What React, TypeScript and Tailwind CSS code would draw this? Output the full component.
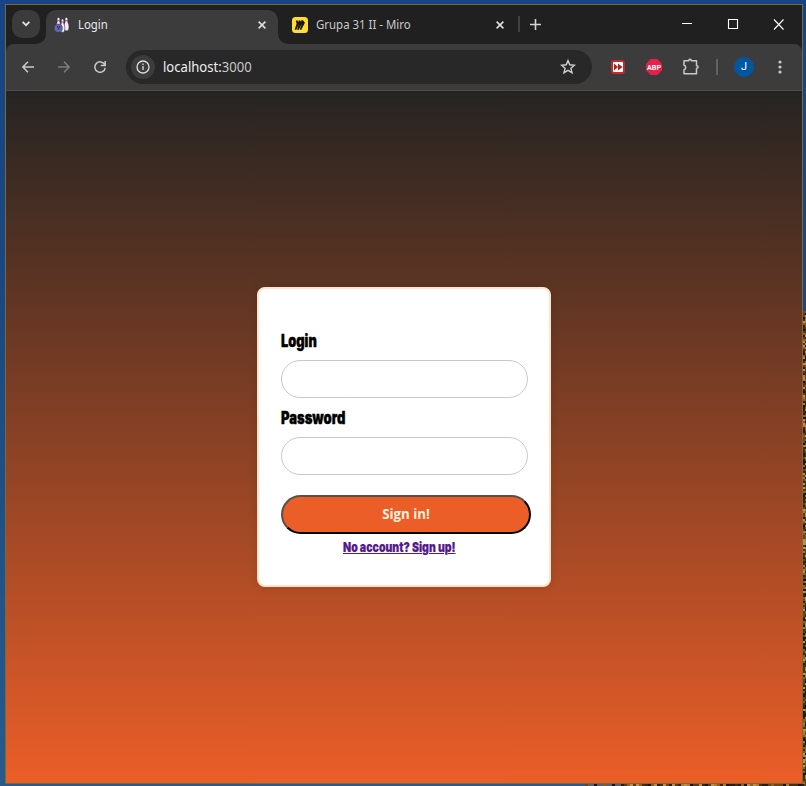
import React from "react";

const GRAIN = ["#6b4518", "#2c1c12", "#a87c38", "#4a2e14", "#b88f50", "#1d140f", "#8a5a1e", "#3b2413", "#8c6026", "#5a3a18"];

function grain(i: number) {
  const n = Math.sin(i * 12.9898) * 43758.5453;
  return GRAIN[Math.floor((n - Math.floor(n)) * GRAIN.length)];
}

function BowlingIcon() {
  return (
    <svg width="16" height="16" viewBox="0 0 16 16">
      <g fill="#f1ecf7" stroke="#281f3d" strokeWidth=".5">
        <path d="M3.1 2c0-2 2.8-2 2.8 0 0 1.3-.5 1.8 0 3.2 1.5 3 1 6 .2 8.300H3c-1-2.500-1.300-5.300.1-8.300.4-1.400 0-1.900 0-3.200Z" />
        <path d="M11 2c0-2 2.800-2 2.800 0 0 1.300-.5 1.800 0 3.200 1.700 3 1.400 6 .4 8.600h-3.500c-1-2.600-1.300-5.600.3-8.600.5-1.400 0-1.900 0-3.200Z" />
        <path d="M7.200 3.500c0-2 2.600-2 2.600 0 0 1.300-.5 1.800 0 3.200 1.500 3 1.200 5.500.3 8.500H7c-.9-3-1.200-5.500.2-8.500.5-1.400 0-1.900 0-3.200Z" />
      </g>
      <path d="M3.300 3.600h2.400M7.300 5h2.400M11.200 3.600h2.400" stroke="#b84462" strokeWidth=".9" />
      <circle cx="4.300" cy="11.200" r="4.100" fill="#6268a7" stroke="#30345f" strokeWidth=".5" />
      <circle cx="3.700" cy="9.700" r=".7" fill="#20244e" />
      <circle cx="5.600" cy="10" r=".7" fill="#20244e" />
      <circle cx="4.700" cy="11.700" r=".7" fill="#20244e" />
    </svg>
  );
}

function MiroIcon() {
  return (
    <svg width="16" height="16" viewBox="0 0 16 16">
      <rect width="16" height="16" rx="3.500" fill="#ffdd33" />
      <path d="M3.800 3.500h1.700l1.100 1.700-.2-1.700h1.800l1.200 1.600-.3-1.900h1.800l2 2.500-3.600 7H7.700l2.200-6.200-3.100 6.200H5l1.800-5.800-2.500 5.800H2.600l2-6Z" fill="#17150d" />
    </svg>
  );
}

function CloseIcon() {
  return (
    <svg width="8" height="8" viewBox="0 0 8 8" fill="none" stroke="#dedede" strokeWidth="1.600">
      <path d="m.6.6 6.800 6.800M7.400.6.600 7.400" />
    </svg>
  );
}

function TabStrip() {
  return (
    <div className="flex h-[39px] shrink-0 bg-[#202020]">
      <div className="flex w-10 justify-start pl-[6px] pt-[5px]">
        <div className="flex h-7 w-7 items-center justify-center rounded-[10px] bg-[#3b3b3b]">
          <svg width="8" height="6" viewBox="0 0 8 6" fill="none" stroke="#e3e3e3" strokeWidth="1.700"><path d="m.6.800 3.400 3.400L7.400.800" /></svg>
        </div>
      </div>
      <div className="mt-[5px] flex h-[34px] w-[232px] items-center rounded-t-[10px] bg-[#3c3c3c] pb-[5px] pl-2 pr-3">
        <BowlingIcon />
        <span className="ml-2 flex-1 origin-left scale-x-[0.91] pt-[2px] text-[12.5px] text-[#e8e8e8]">Login</span>
        <CloseIcon />
      </div>
      <div className="flex h-[39px] w-[240px] items-center pl-[14px] pr-[14px]">
        <MiroIcon />
        <span className="ml-2 flex-1 origin-left scale-x-[0.915] whitespace-nowrap pt-[2px] text-[12.5px] text-[#c9c9c9]">Grupa 31 II - Miro</span>
        <CloseIcon />
      </div>
      <div className="mt-[11px] h-4 w-[2px] bg-[#404040]" />
      <svg className="ml-[10px] mt-[14px]" width="11" height="11" viewBox="0 0 11 11" stroke="#d5d5d5" strokeWidth="1.600"><path d="M5.500 0v11M0 5.500h11" /></svg>
      <div className="ml-auto flex pr-[18px] pt-[14px]">
        <svg width="102" height="11" viewBox="0 0 102 11" fill="none" stroke="white" strokeWidth="1.100">
          <path d="M0 4.500h10M92 .5l9.500 10M101.500.5 92 10.500" />
          <path d="M46.500.5h9v9h-9z" />
        </svg>
      </div>
    </div>
  );
}

function StripCurves() {
  return (
    <div className="flex h-0 shrink-0">
      <svg className="-mt-[10px] ml-[30px] shrink-0" width="10" height="10"><path d="M0 10h10V0A10 10 0 0 1 0 10Z" fill="#3c3c3c" /></svg>
      <svg className="-mt-[10px] ml-[232px] shrink-0" width="10" height="10"><path d="M10 10H0V0A10 10 0 0 0 10 10Z" fill="#3c3c3c" /></svg>
    </div>
  );
}

function Toolbar() {
  return (
    <div className="shrink-0 bg-[#202020]">
      <div className="flex h-[47px] items-center rounded-t-[8px] border-b border-[#4b4b4b] bg-[#3c3c3c] pl-4">
        <svg width="12" height="12" viewBox="0 0 12 12" fill="none" stroke="#c9c9c9" strokeWidth="1.500"><path d="M12 6H1M6 .700.900 6 6 11.300" /></svg>
        <svg className="ml-6" width="12" height="12" viewBox="0 0 12 12" fill="none" stroke="#7d7d7d" strokeWidth="1.500"><path d="M0 6h11M6 .700 11.100 6 6 11.300" /></svg>
        <svg className="ml-6" width="12" height="12" viewBox="0 0 12 12" fill="none" stroke="#c9c9c9" strokeWidth="1.500"><path d="M10.700 3.700A5.200 5.200 0 1 0 11.200 6.800M11.200 0v4.400H6.800" /></svg>
        <div className="ml-5 flex h-[34px] w-[466px] items-center rounded-full bg-[#282828] pl-[5px] pr-4">
          <div className="flex h-6 w-6 items-center justify-center rounded-full bg-[#3c3c3c]">
            <svg width="14" height="14" viewBox="0 0 14 14" fill="none" stroke="#dedede" strokeWidth="1.300"><circle cx="7" cy="7" r="6" /><path d="M7 6v4M7 3.600v1.500" /></svg>
          </div>
          <span className="ml-2 flex-1 origin-left scale-x-[0.955] text-[13.7px] text-[#c7c7c7]"><span className="text-[#efefef]">localhost:</span>3000</span>
          <svg width="16" height="16" viewBox="0 0 16 16" fill="none" stroke="#cecece" strokeWidth="1.400"><path d="m8 1.600 1.800 4.200 4.600.4-3.500 3 1.100 4.500L8 11.300l-4 2.400 1.100-4.500-3.500-3 4.600-.4Z" /></svg>
        </div>
        <svg className="ml-[19px]" width="14" height="14" viewBox="0 0 14 14">
          <rect x="1" y="1" width="12" height="12" rx="2" fill="#fff" stroke="#bb302e" strokeWidth="2" />
          <path d="M3 3.600 7 7l-4 3.400ZM7 3.600 11.500 7 7 10.400Z" fill="#a82224" />
        </svg>
        <svg className="ml-[21px]" width="16" height="16" viewBox="0 0 16 16">
          <path d="M4.700 0h6.600L16 4.700v6.600L11.300 16H4.700L0 11.300V4.700Z" fill="#e91e49" />
          <text x="8" y="10.700" textAnchor="middle" textLength="14" lengthAdjust="spacingAndGlyphs" fontFamily="Roboto, sans-serif" fontWeight="700" fontSize="7.700" fill="white">ABP</text>
        </svg>
        <svg className="ml-5" width="18" height="18" viewBox="0 0 18 18" fill="none" stroke="#c9c9c9" strokeWidth="1.500">
          <path d="M2 2.800h4.700c0-2 2.600-2 2.600 0h5.200v4.900c2.200 0 2.200 2.600 0 2.600v5.500H2v-4c2.300-.6 2.300-4 0-4.600Z" strokeLinejoin="round" />
        </svg>
        <div className="ml-4 h-4 w-[2px] bg-[#626262]" />
        <div className="ml-4 flex h-5 w-5 items-center justify-center rounded-full bg-[#0057a0] pt-px font-[Roboto,sans-serif] text-[11px] text-white">J</div>
        <svg className="ml-[24px]" width="4" height="14" viewBox="0 0 4 14" fill="#c9c9c9"><circle cx="2" cy="2" r="1.600" /><circle cx="2" cy="7" r="1.600" /><circle cx="2" cy="12" r="1.600" /></svg>
      </div>
    </div>
  );
}

function LoginCard() {
  return (
    <form className="flex h-[300px] w-[294px] flex-col rounded-[8px] border-2 border-[#ffe4cb] bg-white px-[22px] pt-[40px] font-[Inter,sans-serif] shadow-[0_0_10px_rgba(0,0,0,0.12)]" onSubmit={(e) => e.preventDefault()}>
      <label className="h-[31px] text-[17px] font-black leading-6 text-black [-webkit-text-stroke:0.4px_black]" htmlFor="login">
        <span className="inline-block origin-left scale-x-[0.755]">Login</span>
      </label>
      <input id="login" className="h-[38px] w-[247px] shrink-0 rounded-full border border-[#c9c9c9] px-4 outline-none" />
      <label className="mt-2 h-[31px] text-[17px] font-black leading-6 text-black [-webkit-text-stroke:0.4px_black]" htmlFor="password">
        <span className="inline-block origin-left scale-x-[0.765]">Password</span>
      </label>
      <input id="password" type="password" className="h-[38px] w-[247px] shrink-0 rounded-full border border-[#c9c9c9] px-4 outline-none" />
      <button className="mt-5 h-[39px] w-[250px] shrink-0 rounded-full border-2 border-b-black border-l-[#55504c] border-r-black border-t-[#55504c] bg-[#eb5e28] font-['Open_Sans',sans-serif] text-[13.3px] font-bold text-[#fff3df]">Sign in!</button>
      <a href="#signup" className="ml-[62px] mt-[4px] w-max origin-left scale-x-[0.783] whitespace-nowrap text-[13.5px] font-black leading-[19px] text-[#551a8b] underline underline-offset-1 [-webkit-text-stroke:0.2px_#551a8b]">No account? Sign up!</a>
    </form>
  );
}

export default function App() {
  return (
    <div className="flex h-[786px] w-[806px] flex-col overflow-hidden bg-[linear-gradient(#174486,#1b4881_40%,#285a8e)] font-['Noto_Sans',sans-serif]">
      <div className="h-1 shrink-0" />
      <div className="flex h-[780px] shrink-0 pl-[5px]">
        <div className="flex w-[798px] shrink-0 flex-col border border-[#786b35]">
          <TabStrip />
          <StripCurves />
          <Toolbar />
          <main className="flex flex-1 items-start justify-center bg-[linear-gradient(#252422,#eb5e28)] pt-[196px]">
            <LoginCard />
          </main>
        </div>
        <div className="flex w-[3px] shrink-0 flex-col pt-[307px]">
          {Array.from({ length: 237 }, (_, i) => (
            <div key={i} className="flex h-[2px] shrink-0">
              <div className="w-[2px]" style={{ background: grain(i) }} />
              <div className="w-px" style={{ background: grain(i + 500) }} />
            </div>
          ))}
        </div>
      </div>
      <div className="flex h-[2px] shrink-0 pl-[585px]">
        {Array.from({ length: 74 }, (_, i) => (
          <div key={i} className="w-[3px] shrink-0" style={{ background: i < 13 && i % 3 ? "#526174" : grain(i) }} />
        ))}
      </div>
    </div>
  );
}
